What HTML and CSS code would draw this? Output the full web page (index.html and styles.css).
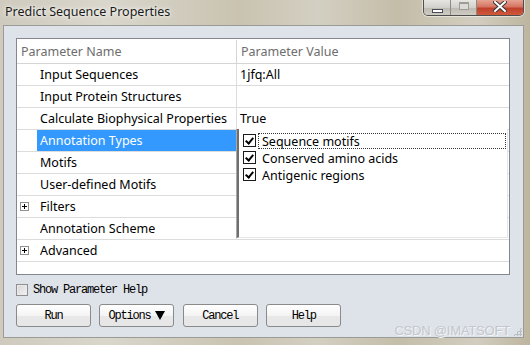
FILE: index.html
```html
<!DOCTYPE html>
<html>
<head>
<meta charset="utf-8">
<link rel="stylesheet" href="styles.css">
</head>
<body>
<div class="window">
  <div class="titlebar">
    <span class="title">Predict Sequence Properties</span>
    <div class="caption-buttons">
      <div class="cbtn min"><span class="min-glyph"></span></div>
      <div class="cbtn max"><span class="max-glyph"></span></div>
      <div class="cbtn close">
        <svg width="14" height="11" viewBox="0 0 14 11">
          <path d="M2 1 L12 10 M12 1 L2 10" stroke="#3a3a3a" stroke-width="4" stroke-linecap="square"/>
          <path d="M2 1 L12 10 M12 1 L2 10" stroke="#ffffff" stroke-width="2" stroke-linecap="square"/>
        </svg>
      </div>
    </div>
  </div>
  <div class="client">
    <div class="grid">
      <div class="header">
        <div class="hname">Parameter Name</div>
        <div class="hvalue">Parameter Value</div>
      </div>
      <div class="row"><div class="gutter"></div><div class="name">Input Sequences</div><div class="value">1jfq:All</div></div>
      <div class="row"><div class="gutter"></div><div class="name">Input Protein Structures</div><div class="value"></div></div>
      <div class="row"><div class="gutter"></div><div class="name">Calculate Biophysical Properties</div><div class="value">True</div></div>
      <div class="row"><div class="gutter"></div><div class="name selected">Annotation Types</div><div class="value"></div></div>
      <div class="row"><div class="gutter"></div><div class="name">Motifs</div><div class="value"></div></div>
      <div class="row"><div class="gutter"></div><div class="name">User-defined Motifs</div><div class="value"></div></div>
      <div class="row"><div class="gutter"><span class="plus"></span></div><div class="name">Filters</div><div class="value"></div></div>
      <div class="row"><div class="gutter"></div><div class="name">Annotation Scheme</div><div class="value"></div></div>
      <div class="row category"><div class="gutter"><span class="plus"></span></div><div class="name">Advanced</div></div>
      <div class="filler"></div>
      <div class="listbox">
        <div class="item focused"><span class="check"></span><span class="label">Sequence motifs</span></div>
        <div class="item"><span class="check"></span><span class="label">Conserved amino acids</span></div>
        <div class="item"><span class="check"></span><span class="label">Antigenic regions</span></div>
      </div>
    </div>
    <div class="help-row">
      <span class="help-box"></span>
      <span class="mono">Show Parameter Help</span>
    </div>
    <div class="buttons">
      <div class="btn mono">Run</div>
      <div class="btn mono">Options <span class="tri"></span></div>
      <div class="btn mono">Cancel</div>
      <div class="btn mono">Help</div>
    </div>
    <div class="watermark">CSDN @IMATSOFT</div>
    <div class="grip"></div>
  </div>
</div>
</body>
</html>
```

FILE: styles.css
```css
* { box-sizing: border-box; }
html, body { margin: 0; padding: 0; }
body {
  width: 530px;
  height: 345px;
  overflow: hidden;
  font-family: "Noto Sans", "Open Sans", sans-serif;
}
.window {
  width: 530px;
  height: 345px;
  display: flex;
  flex-direction: column;
  padding: 0 6px 7px 3px;
  background:
    linear-gradient(90deg, #cfcabd 0%, #d9d6cc 20%, #c9c3b0 45%, #d3cfc2 60%, #c4bda8 75%, #d2cdbf 90%, #bdb59e 100%);
}
.titlebar {
  height: 25px;
  flex: none;
  display: flex;
  justify-content: space-between;
  align-items: flex-start;
  margin-left: -3px;
  margin-right: -6px;
  padding-left: 5px;
  padding-right: 6px;
}
.title {
  font-family: "Noto Sans", sans-serif;
  font-size: 12.5px;
  line-height: 14px;
  padding-top: 5px;
  color: #1a1a1a;
  text-shadow: 0 0 6px rgba(255,255,255,0.9), 0 0 3px rgba(255,255,255,0.9);
}
.caption-buttons {
  display: flex;
  height: 16px;
  border: 1px solid #4e4e4e;
  border-top: none;
  border-radius: 0 0 5px 5px;
  overflow: hidden;
  box-shadow: 0 0 0 1px rgba(255,255,255,0.5);
}
.cbtn {
  height: 15px;
  display: flex;
  align-items: center;
  justify-content: center;
}
.min, .max {
  width: 27px;
  background: linear-gradient(#e6e6e2 0%, #d2d0ca 50%, #bcb9b0 51%, #cfccc3 100%);
  border-right: 1px solid #8c8a86;
}
.max { width: 26px; }
.min-glyph {
  width: 11px;
  height: 4px;
  margin-top: 6px;
  background: #fff;
  border: 1px solid #474b55;
}
.max-glyph {
  width: 10px;
  height: 8px;
  margin-top: -3px;
  border: 1px solid #9e9c98;
  border-top-width: 2px;
  background: #dcdad5;
}
.close {
  width: 46px;
  background: linear-gradient(#e7a392 0%, #d67462 45%, #c0402a 55%, #d05a3c 100%);
}
.close svg { margin-top: -3px; }

.client {
  flex: 1;
  position: relative;
  background: #dee2e9;
  border: 1px solid #9a9a96;
  padding: 12px 13px 0 12px;
}
.grid {
  position: relative;
  width: 494px;
  height: 237px;
  border: 1px solid #828790;
  background: #fff;
  display: flex;
  flex-direction: column;
  font-size: 12.5px;
  color: #000;
}
.header {
  height: 25px;
  flex: none;
  display: flex;
  border-bottom: 1px solid #d5d5d5;
  color: #6d6d6d;
  line-height: 24px;
  padding-top: 1px;
}
.hname {
  width: 220px;
  padding-left: 4px;
  border-right: 1px solid #d5d5d5;
}
.hvalue { padding-left: 4px; }
.row {
  height: 22px;
  flex: none;
  display: flex;
  border-bottom: 1px solid #dcdcdc;
  line-height: 22px;
}
.gutter {
  width: 20px;
  flex: none;
  display: flex;
  align-items: center;
  padding-left: 3px;
}
.plus {
  width: 9px;
  height: 9px;
  border: 1px solid #919191;
  position: relative;
  background: #fff;
}
.plus::before, .plus::after {
  content: "";
  position: absolute;
  background: #000;
}
.plus::before { left: 1px; top: 3px; width: 5px; height: 1px; }
.plus::after { left: 3px; top: 1px; width: 1px; height: 5px; }
.name {
  width: 200px;
  flex: none;
  padding-left: 3px;
  border-right: 1px solid #dcdcdc;
  white-space: nowrap;
}
.name.selected {
  background: #3399ff;
  color: #fff;
}
.category .name { border-right: none; }
.value {
  flex: 1;
  padding-left: 3px;
}
.filler { flex: 1; }

.listbox {
  position: absolute;
  left: 220px;
  top: 90px;
  width: 271px;
  height: 109px;
  background: #fff;
  border-left: 2px solid #6f6f6f;
  border-bottom: 1px solid #e6e6e6;
  border-right: 1px solid #e6e6e6;
  box-shadow: -1px 0 0 #a8a8a8;
  padding-top: 3px;
  padding-left: 4px;
  padding-right: 1px;
}
.item {
  height: 17px;
  display: flex;
  align-items: center;
  line-height: 16px;
}
.check {
  width: 13px;
  height: 13px;
  flex: none;
  border: 1px solid #1a1a1a;
  position: relative;
  margin-right: 2px;
}
.check::after {
  content: "";
  position: absolute;
  left: 3px;
  top: 1px;
  width: 3px;
  height: 6px;
  border: solid #000;
  border-width: 0 2px 2px 0;
  transform: rotate(40deg);
}
.label {
  flex: 1;
  padding-left: 3px;
  height: 16px;
  border: 1px dotted transparent;
}
.item.focused .label { border-color: #333; }

.mono {
  font-family: "Liberation Mono", "DejaVu Sans Mono", monospace;
  font-size: 12px;
  letter-spacing: -1.2px;
  color: #000;
}
.help-row {
  display: flex;
  align-items: center;
  gap: 5px;
  margin-top: 8px;
  height: 13px;
}
.help-box {
  width: 12px;
  height: 12px;
  border: 1px solid #8f8f8f;
  background: linear-gradient(135deg, #d6d6d6, #f4f4f4);
  box-shadow: inset 0 0 0 1px #eaeaea;
}
.buttons {
  display: flex;
  gap: 8.4px;
  margin-top: 8px;
}
.btn {
  width: 75px;
  height: 23px;
  border: 1px solid #8a8a8a;
  border-radius: 3px;
  background: linear-gradient(#ffffff 0%, #f4f4f4 50%, #e8e8e8 51%, #e6e6e6 100%);
  display: flex;
  align-items: center;
  justify-content: center;
  gap: 5px;
}
.tri {
  width: 0;
  height: 0;
  border-left: 5px solid transparent;
  border-right: 5px solid transparent;
  border-top: 9px solid #000;
}
.watermark {
  position: absolute;
  right: 13px;
  bottom: -1px;
  font-family: "Liberation Sans", sans-serif;
  font-size: 13px;
  color: #c3c7cd;
  text-shadow: 1px 1px 0 #f4f5f7;
  letter-spacing: -0.2px;
}
.grip {
  position: absolute;
  right: 1px;
  bottom: 1px;
  width: 9px;
  height: 9px;
  background-image: radial-gradient(circle, #b8bcc4 1px, transparent 1.2px);
  background-size: 3px 3px;
  clip-path: polygon(100% 0, 100% 100%, 0 100%);
}
```
